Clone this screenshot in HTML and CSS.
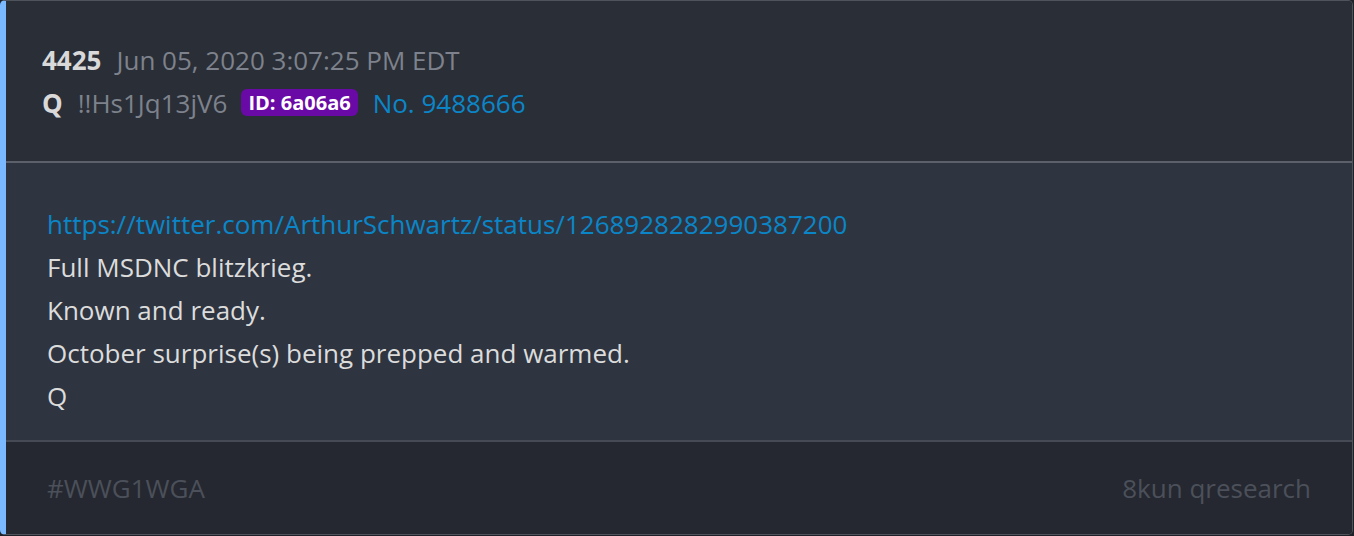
FILE: index.html
```html
<!DOCTYPE html>
<html lang="en">
<head>
  <meta charset="UTF-8">
  <meta name="viewport" content="width=device-width, initial-scale=1.0">
  <title>Post 4425</title>
  <link rel="stylesheet" href="styles.css">
</head>
<body>
  <div class="post">
    <div class="post-header">
      <div class="meta-row">
        <span class="post-num">4425</span>
        <span class="post-date">Jun 05, 2020 3:07:25 PM EDT</span>
      </div>
      <div class="meta-row">
        <span class="author">Q</span>
        <span class="trip">!!Hs1Jq13jV6</span>
        <span class="user-id">ID: 6a06a6</span>
        <a class="post-link" href="#">No. 9488666</a>
      </div>
    </div>

    <div class="post-body">
      <a class="body-link" href="#">https://twitter.com/ArthurSchwartz/status/1268928282990387200</a>
      <p>Full MSDNC blitzkrieg.</p>
      <p>Known and ready.</p>
      <p>October surprise(s) being prepped and warmed.</p>
      <p>Q</p>
    </div>

    <div class="post-footer">
      <span>#WWG1WGA</span>
      <span>8kun qresearch</span>
    </div>
  </div>
</body>
</html>
```

FILE: styles.css
```css
body {
  margin: 0;
  background: #1e2128;
  font-family: 'Open Sans', 'Noto Sans', sans-serif;
}
.post {
  height: 535px;
  width: 1353px;
  box-sizing: border-box;
  border: 1px solid #4e535c;
  border-left: 6px solid #7ab9ff;
  border-radius: 5px;
  overflow: hidden;
  display: flex;
  flex-direction: column;
}
.post-header {
  background: #2a2e37;
  height: 162px;
  box-sizing: border-box;
  padding: 37px 36px 0;
  border-bottom: 2px solid #5b606a;
}
.meta-row {
  display: flex;
  align-items: center;
  height: 43px;
  font-size: 26px;
  color: #7d828c;
}
.post-num, .author {
  font-weight: bold;
  color: #d9d9d9;
  margin-right: 15px;
}
.post-date {
  color: #7d828c;
}
.trip {
  margin-right: 14px;
}
.user-id {
  background: #6a0aa6;
  color: #fff;
  font-weight: bold;
  font-size: 20px;
  padding: 0 7px;
  line-height: 27px;
  border-radius: 6px;
  margin-right: 15px;
}
.post-link, .body-link {
  color: #0a86c8;
  text-decoration: none;
}
.post-body {
  background: #2f3540;
  flex: 1;
  padding: 40px 41px 0;
  border-bottom: 2px solid #454a54;
  font-size: 26px;
  line-height: 43px;
  color: #dcdcdc;
}
.body-link {
  display: block;
}
.post-body p {
  margin: 0;
}
.post-footer {
  background: #252830;
  height: 92px;
  box-sizing: border-box;
  display: flex;
  justify-content: space-between;
  align-items: center;
  padding: 0 41px;
  font-size: 26px;
  color: #4b505a;
}
```
